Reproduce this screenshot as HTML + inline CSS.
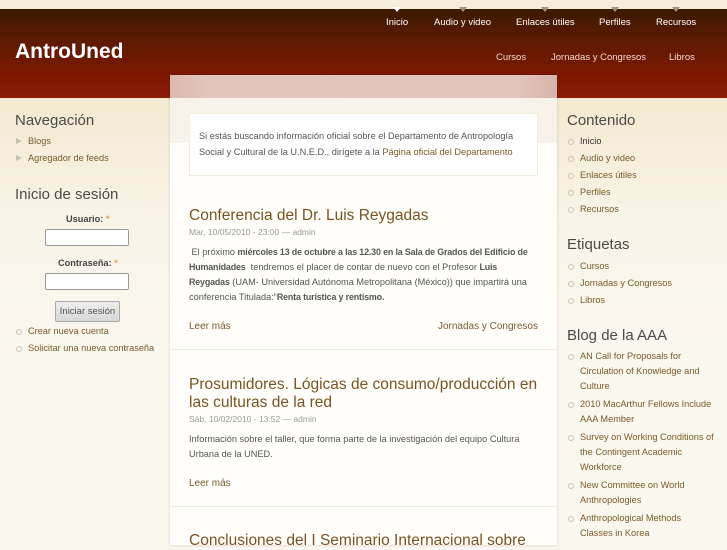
<!DOCTYPE html>
<html><head><meta charset="utf-8"><style>
*{margin:0;padding:0;box-sizing:border-box}
body{width:727px;height:545px;overflow:hidden;background:#faf7ef;font-family:"Liberation Sans",sans-serif;font-size:10px;color:#555;position:relative}
a{color:#7a5a28;text-decoration:none}
.top{position:absolute;left:0;top:0;width:727px;height:9px;background:#f5eedb}
.hdr{position:absolute;left:0;top:9px;width:727px;height:89px;background:linear-gradient(#3a1a02,#5e1a02 35%,#7d1800 75%,#8e1d06)}
.logo{position:absolute;left:15px;top:40px;color:#fff;font-weight:bold;font-size:21px}
.nav1,.nav2{position:absolute;color:#fff;font-size:9.5px}
.nav1 span{position:absolute;top:17px;white-space:nowrap}
.nav1 span:before{content:"";position:absolute;left:50%;top:-10px;margin-left:-4px;border:4px solid transparent;border-top:5px solid #a09080}
.nav1 span.act:before{border-top-color:#fff}
.nav2 span{position:absolute;top:52px;white-space:nowrap;color:#f0d8d0}
.side{position:absolute;top:98px;width:170px;height:447px;background:linear-gradient(#f3e9d1,#f8f3e6 110px,#faf7ef 250px)}
h2{font-weight:normal;font-size:15px;color:#4a4a4a;position:absolute}
ul{list-style:none;position:absolute;font-size:9.2px}
li{position:relative;padding-left:13px;line-height:17px}
li:before{content:"";position:absolute;left:1px;top:6px;width:4px;height:4px;border:1px solid #ccc4b4;border-radius:50%}
.tri li:before{border:none;border-left:6px solid #c8c0b0;border-top:3.5px solid transparent;border-bottom:3.5px solid transparent;width:0;height:0;border-radius:0;top:5px}
.main{position:absolute;left:170px;top:75px;width:387px;height:470px;background:#fffefb;box-shadow:0 0 3px rgba(0,0,0,.15)}
.mtop{position:absolute;left:0;top:0;width:387px;height:23px;background:linear-gradient(90deg,#d9b8ae,#e3c5bd 10%,#e2c4bc 90%,#d6b3aa)}
.mband{position:absolute;left:0;top:23px;width:387px;height:45px;background:#f8f3ea}
.note{position:absolute;left:19px;top:38px;width:349px;height:63px;background:#fff;border:1px solid #f1ece0;padding:14px 9px;line-height:16px;color:#555;font-size:9.2px}
.post{position:absolute;left:19px;width:349px}
.post h3{font-weight:normal;font-size:15.5px;color:#7a5420;line-height:18px}
.meta{color:#999;font-size:8.5px;margin-top:2px}
.body{line-height:15px;margin-top:8px;font-size:9.2px;color:#555}
.body b{font-size:8.9px;letter-spacing:-0.15px}
.sep{position:absolute;left:0;width:387px;height:1px;background:#f1ece0}
input{position:absolute;width:84px;height:17px;border:1px solid #999;border-radius:2px;background:#fff}
label{position:absolute;font-weight:bold;color:#444;font-size:9.2px}
label b{color:#e8a040}
.btn{position:absolute;left:55px;top:301px;width:65px;height:21px;border:1px solid #aaa;border-radius:2px;background:linear-gradient(#eee,#d8d8d8);color:#555;font-size:9.5px;text-align:center;line-height:19px}
.aaa li{line-height:15px;margin-bottom:3px}
.aaa li:before{top:5px}
</style></head><body>
<div class="top"></div>
<div class="hdr"></div>
<div class="logo">AntroUned</div>
<div class="nav1">
<span class="act" style="left:386px">Inicio</span>
<span style="left:434px">Audio y video</span>
<span style="left:516px">Enlaces útiles</span>
<span style="left:599px">Perfiles</span>
<span style="left:656px">Recursos</span>
</div>
<div class="nav2">
<span style="left:496px">Cursos</span>
<span style="left:551px">Jornadas y Congresos</span>
<span style="left:669px">Libros</span>
</div>

<div class="side" style="left:0"></div>
<div class="side" style="left:557px"></div>

<h2 style="left:15px;top:112px">Navegación</h2>
<ul class="tri" style="left:15px;top:133px"><li><a>Blogs</a></li><li><a>Agregador de feeds</a></li></ul>
<h2 style="left:15px;top:186px">Inicio de sesión</h2>
<label style="left:66px;top:214px">Usuario: <b>*</b></label>
<input style="left:45px;top:229px">
<label style="left:58px;top:258px">Contraseña: <b>*</b></label>
<input style="left:45px;top:273px">
<div class="btn">Iniciar sesión</div>
<ul style="left:15px;top:323px"><li><a>Crear nueva cuenta</a></li><li><a>Solicitar una nueva contraseña</a></li></ul>

<h2 style="left:567px;top:112px">Contenido</h2>
<ul style="left:567px;top:133px"><li><a style="color:#333">Inicio</a></li><li><a>Audio y video</a></li><li><a>Enlaces útiles</a></li><li><a>Perfiles</a></li><li><a>Recursos</a></li></ul>
<h2 style="left:567px;top:236px">Etiquetas</h2>
<ul style="left:567px;top:258px"><li><a>Cursos</a></li><li><a>Jornadas y Congresos</a></li><li><a>Libros</a></li></ul>
<h2 style="left:567px;top:327px">Blog de la AAA</h2>
<ul class="aaa" style="left:567px;top:349px;width:148px"><li><a>AN Call for Proposals for Circulation of Knowledge and Culture</a></li><li><a>2010 MacArthur Fellows Include AAA Member</a></li><li><a>Survey on Working Conditions of the Contingent Academic Workforce</a></li><li><a>New Committee on World Anthropologies</a></li><li><a>Anthropological Methods Classes in Korea</a></li></ul>

<div class="main">
<div class="mtop"></div>
<div class="mband"></div>
<div class="note">Si estás buscando información oficial sobre el Departamento de Antropología Social y Cultural de la U.N.E.D., dirígete a la <a>Página oficial del Departamento</a></div>
<div class="post" style="top:132px"><h3>Conferencia del Dr. Luis Reygadas</h3><div class="meta">Mar, 10/05/2010 - 23:00 — admin</div>
<div class="body">&nbsp;El próximo <b>miércoles 13 de octubre a las 12.30 en la Sala de Grados del Edificio de Humanidades</b>&nbsp; tendremos el placer de contar de nuevo con el Profesor <b>Luis Reygadas</b> (UAM- Universidad Autónoma Metropolitana (México)) que impartirá una conferencia Titulada:“<b>Renta turística y rentismo.</b></div>
<div style="position:absolute;top:114px;left:0"><a>Leer más</a></div><div style="position:absolute;top:114px;right:0"><a>Jornadas y Congresos</a></div></div>
<div class="sep" style="top:274px"></div>
<div class="post" style="top:301px"><h3>Prosumidores. Lógicas de consumo/producción en las culturas de la red</h3><div class="meta">Sáb, 10/02/2010 - 13:52 — admin</div>
<div class="body">Información sobre el taller, que forma parte de la investigación del equipo Cultura Urbana de la UNED.</div>
<div style="position:absolute;top:102px;left:0"><a>Leer más</a></div></div>
<div class="sep" style="top:431px"></div>
<div class="post" style="top:457px"><h3>Conclusiones del I Seminario Internacional sobre</h3></div>
</div>
</body></html>
